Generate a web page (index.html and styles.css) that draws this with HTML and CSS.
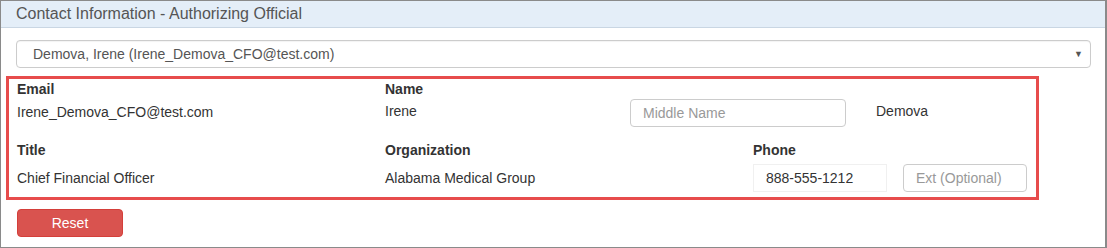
FILE: index.html
```html
<!DOCTYPE html>
<html lang="en">
<head>
  <meta charset="UTF-8">
  <title>Contact Information - Authorizing Official</title>
  <link rel="stylesheet" href="styles.css">
</head>
<body>
  <div class="panel">
    <div class="panel-heading">Contact Information - Authorizing Official</div>
    <div class="panel-body">
      <div class="select-box">
        <span>Demova, Irene (Irene_Demova_CFO@test.com)</span>
        <span class="caret">&#9660;</span>
      </div>

      <div class="contact-box">
        <div class="row">
          <div class="field">
            <label>Email</label>
            <div class="value">Irene_Demova_CFO@test.com</div>
          </div>
          <div class="field">
            <label>Name</label>
            <div class="name-row">
              <div class="value">Irene</div>
              <input class="input middle" type="text" placeholder="Middle Name">
              <div class="value last">Demova</div>
            </div>
          </div>
        </div>

        <div class="row row3">
          <div class="field">
            <label>Title</label>
            <div class="value">Chief Financial Officer</div>
          </div>
          <div class="field">
            <label>Organization</label>
            <div class="value">Alabama Medical Group</div>
          </div>
          <div class="field">
            <label>Phone</label>
            <div class="phone-row">
              <input class="input phone" type="text" value="888-555-1212">
              <input class="input ext" type="text" placeholder="Ext (Optional)">
            </div>
          </div>
        </div>
      </div>

      <button class="btn-reset">Reset</button>
    </div>
  </div>
</body>
</html>
```

FILE: styles.css
```css
* {
  box-sizing: border-box;
}
body {
  margin: 0;
  font-family: "Liberation Sans", Arial, sans-serif;
  font-size: 14px;
  color: #333;
  background: #fff;
}
.panel {
  width: 1107px;
  height: 248px;
  border: 1px solid #8a8a8a;
  border-right-width: 2px;
}
.panel-heading {
  height: 27px;
  padding: 4px 15px 0;
  background-color: #e4eef8;
  border-bottom: 1px solid #c9d6e3;
  font-size: 16px;
  color: #555;
}
.panel-body {
  padding: 12px 14px 0 15px;
}
.select-box {
  display: flex;
  align-items: center;
  justify-content: space-between;
  height: 28px;
  padding: 0 7px 0 16px;
  border: 1px solid #ccc;
  border-radius: 4px;
  color: #555;
  box-shadow: inset 0 1px 1px rgba(0, 0, 0, 0.05);
}
.caret {
  font-size: 9px;
  color: #555;
}
.contact-box {
  width: 1033px;
  margin: 8px 0 9px -10px;
  padding: 0 0 5px 8px;
  border: 3px solid #e74c4c;
}
.row {
  display: grid;
  grid-template-columns: 368px 1fr;
}
.row3 {
  grid-template-columns: 368px 368px 1fr;
  margin-top: 13px;
}
label {
  display: block;
  font-weight: bold;
  line-height: 20px;
}
.value {
  line-height: 20px;
  margin-top: 3px;
}
.row3 .value {
  margin-top: 8px;
}
.name-row {
  display: flex;
  align-items: flex-start;
}
.name-row .value {
  width: 245px;
  margin-top: 2px;
}
.name-row .last {
  width: auto;
  margin-left: 30px;
}
.input {
  height: 28px;
  padding: 0 12px;
  border: 1px solid #ccc;
  border-radius: 4px;
  font-family: inherit;
  font-size: 14px;
  color: #333;
}
.input::placeholder {
  color: #999;
}
.middle {
  width: 216px;
  margin-top: 0;
}
.phone-row {
  display: flex;
  gap: 16px;
  margin-top: 4px;
}
.phone {
  width: 134px;
  border-color: #f0f0f0;
  border-radius: 0;
}
.ext {
  width: 124px;
}
.btn-reset {
  display: block;
  width: 106px;
  height: 28px;
  margin-left: 1px;
  border: 1px solid #d43f3a;
  border-radius: 4px;
  background-color: #d9534f;
  color: #fff;
  font-family: inherit;
  font-size: 14px;
}
```
